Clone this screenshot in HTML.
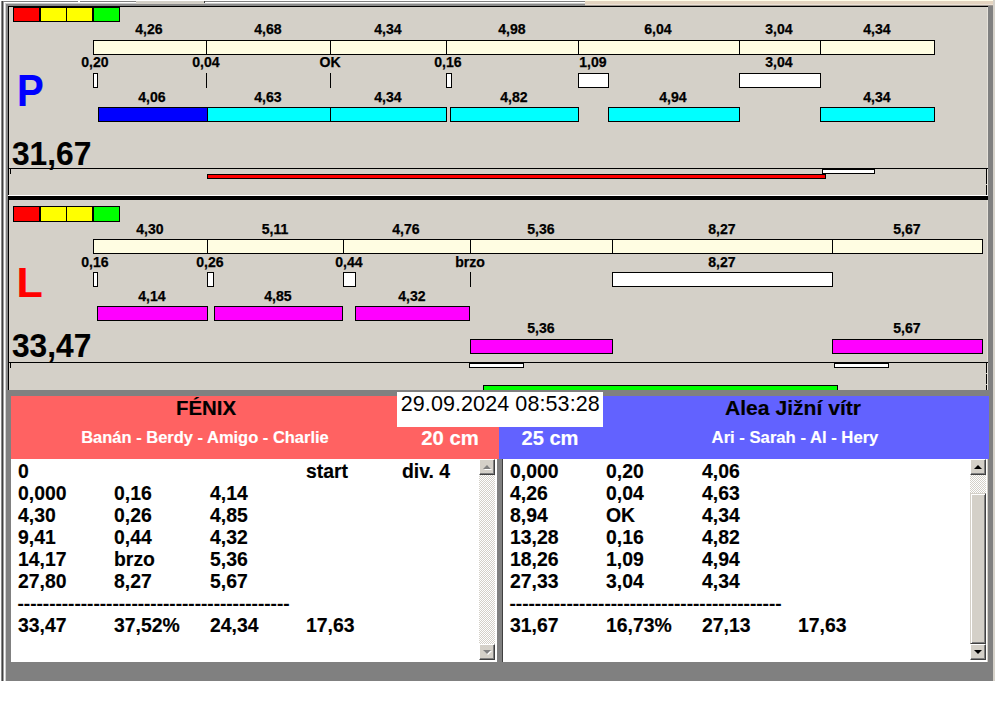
<!DOCTYPE html>
<html><head><meta charset="utf-8"><style>
html,body{margin:0;padding:0;}
body{width:995px;height:716px;position:relative;overflow:hidden;background:#fff;font-family:"Liberation Sans",sans-serif;}
.a{position:absolute;box-sizing:content-box;}
.t{position:absolute;white-space:nowrap;font-family:"Liberation Sans",sans-serif;}
.chk{background-color:#fff;background-image:linear-gradient(45deg,#d4d0c8 25%,transparent 25%,transparent 75%,#d4d0c8 75%),linear-gradient(45deg,#d4d0c8 25%,transparent 25%,transparent 75%,#d4d0c8 75%);background-size:2px 2px;background-position:0 0,1px 1px;}
.btn{width:16px;height:16px;box-sizing:border-box;background:#d4d0c8;border-top:1px solid #fff;border-left:1px solid #fff;border-right:1px solid #404040;border-bottom:1px solid #404040;box-shadow:inset -1px -1px 0 #808080;}
.thumb{box-sizing:border-box;background:#d4d0c8;border-top:1px solid #d4d0c8;border-left:1px solid #d4d0c8;border-right:1px solid #404040;border-bottom:1px solid #404040;box-shadow:inset 1px 1px 0 #fff,inset -1px -1px 0 #808080;}
svg.a{overflow:visible}
</style></head><body>
<div class="a" style="left:0px;top:0px;width:995px;height:716px;background:#ffffff;"></div>
<div class="a" style="left:1px;top:1px;width:994px;height:680px;background:#d4d0c8;"></div>
<div class="a" style="left:0px;top:0px;width:585px;height:1px;background:#ffffff;"></div>
<div class="a" style="left:585px;top:0px;width:410px;height:1px;background:#fffde8;"></div>
<div class="a" style="left:1px;top:1px;width:135px;height:1px;background:#808080;"></div>
<div class="a" style="left:1px;top:2px;width:135px;height:1px;background:#ffffff;"></div>
<div class="a" style="left:1px;top:3px;width:135px;height:1px;background:#c8c8c8;"></div>
<div class="a" style="left:204px;top:1px;width:381px;height:1px;background:#808080;"></div>
<div class="a" style="left:204px;top:2px;width:381px;height:1px;background:#ffffff;"></div>
<div class="a" style="left:204px;top:3px;width:381px;height:1px;background:#c8c8c8;"></div>
<div class="a" style="left:1px;top:4px;width:584px;height:2px;background:#8a8a8a;"></div>
<div class="a" style="left:78px;top:1px;width:2px;height:1px;background:#ffffff;"></div>
<div class="a" style="left:204px;top:1px;width:1px;height:2px;background:#404040;"></div>
<div class="a" style="left:585px;top:1px;width:410px;height:3px;background:#e4d4c0;"></div>
<div class="a" style="left:585px;top:4px;width:410px;height:1px;background:#ebe0d4;"></div>
<div class="a" style="left:585px;top:5px;width:410px;height:1px;background:#a09890;"></div>
<div class="a" style="left:1px;top:1px;width:1px;height:680px;background:#8a8a8a;"></div>
<div class="a" style="left:2px;top:1px;width:1px;height:680px;background:#404040;"></div>
<div class="a" style="left:3px;top:2px;width:1px;height:679px;background:#a0a0a0;"></div>
<div class="a" style="left:4px;top:2px;width:1px;height:679px;background:#ffffff;"></div>
<div class="a" style="left:5px;top:3px;width:1px;height:678px;background:#d0d0d0;"></div>
<div class="a" style="left:6px;top:4px;width:2px;height:677px;background:#858585;"></div>
<div class="a" style="left:988px;top:6px;width:5px;height:675px;background:#808080;"></div>
<div class="a" style="left:987px;top:7px;width:1px;height:383px;background:#e6e2da;"></div>
<div class="a" style="left:993px;top:0px;width:2px;height:681px;background:#d6d2ca;"></div>
<div class="a" style="left:8px;top:6px;width:979px;height:190px;background:#d4d0c8;"></div>
<div class="a" style="left:8px;top:6px;width:980px;height:1px;background:#000;"></div>
<div class="a" style="left:8px;top:6px;width:1px;height:189px;background:#000;"></div>
<div class="a" style="left:8px;top:195px;width:980px;height:1px;background:#fff;"></div>
<div class="a" style="left:8px;top:196px;width:980px;height:4px;background:#000;"></div>
<div class="a" style="left:8px;top:200px;width:979px;height:190px;background:#d4d0c8;"></div>
<div class="a" style="left:8px;top:200px;width:1px;height:190px;background:#000;"></div>
<div class="a" style="left:13px;top:7px;width:107px;height:15px;background:#000;"></div>
<div class="a" style="left:14px;top:8px;width:25px;height:13px;background:#ff0000;"></div>
<div class="a" style="left:41px;top:8px;width:25px;height:13px;background:#ffff00;"></div>
<div class="a" style="left:67px;top:8px;width:25px;height:13px;background:#ffff00;"></div>
<div class="a" style="left:94px;top:8px;width:25px;height:13px;background:#00ff00;"></div>
<div class="a" style="left:93px;top:40px;width:840px;height:13px;background:#fffde2;border:1px solid #000;"></div>
<div class="a" style="left:206px;top:40px;width:1px;height:15px;background:#000;"></div>
<div class="a" style="left:330px;top:40px;width:1px;height:15px;background:#000;"></div>
<div class="a" style="left:446px;top:40px;width:1px;height:15px;background:#000;"></div>
<div class="a" style="left:578px;top:40px;width:1px;height:15px;background:#000;"></div>
<div class="a" style="left:739px;top:40px;width:1px;height:15px;background:#000;"></div>
<div class="a" style="left:820px;top:40px;width:1px;height:15px;background:#000;"></div>
<div class="t" style="left:-51.00px;top:22.12px;width:400px;text-align:center;font-size:14.5px;line-height:14.5px;font-weight:bold;color:#000;transform:scaleX(0.97);transform-origin:center top;-webkit-text-stroke:0.25px #000;">4,26</div>
<div class="t" style="left:67.50px;top:22.12px;width:400px;text-align:center;font-size:14.5px;line-height:14.5px;font-weight:bold;color:#000;transform:scaleX(0.97);transform-origin:center top;-webkit-text-stroke:0.25px #000;">4,68</div>
<div class="t" style="left:187.50px;top:22.12px;width:400px;text-align:center;font-size:14.5px;line-height:14.5px;font-weight:bold;color:#000;transform:scaleX(0.97);transform-origin:center top;-webkit-text-stroke:0.25px #000;">4,34</div>
<div class="t" style="left:311.50px;top:22.12px;width:400px;text-align:center;font-size:14.5px;line-height:14.5px;font-weight:bold;color:#000;transform:scaleX(0.97);transform-origin:center top;-webkit-text-stroke:0.25px #000;">4,98</div>
<div class="t" style="left:458.00px;top:22.12px;width:400px;text-align:center;font-size:14.5px;line-height:14.5px;font-weight:bold;color:#000;transform:scaleX(0.97);transform-origin:center top;-webkit-text-stroke:0.25px #000;">6,04</div>
<div class="t" style="left:579.00px;top:22.12px;width:400px;text-align:center;font-size:14.5px;line-height:14.5px;font-weight:bold;color:#000;transform:scaleX(0.97);transform-origin:center top;-webkit-text-stroke:0.25px #000;">3,04</div>
<div class="t" style="left:676.50px;top:22.12px;width:400px;text-align:center;font-size:14.5px;line-height:14.5px;font-weight:bold;color:#000;transform:scaleX(0.97);transform-origin:center top;-webkit-text-stroke:0.25px #000;">4,34</div>
<div class="a" style="left:93px;top:73px;width:3px;height:13px;background:#fff;border:1px solid #000;"></div>
<div class="t" style="left:-105.50px;top:55.02px;width:400px;text-align:center;font-size:14.5px;line-height:14.5px;font-weight:bold;color:#000;transform:scaleX(0.97);transform-origin:center top;-webkit-text-stroke:0.25px #000;">0,20</div>
<div class="a" style="left:206px;top:73px;width:1px;height:15px;background:#000;"></div>
<div class="t" style="left:5.50px;top:55.02px;width:400px;text-align:center;font-size:14.5px;line-height:14.5px;font-weight:bold;color:#000;transform:scaleX(0.97);transform-origin:center top;-webkit-text-stroke:0.25px #000;">0,04</div>
<div class="a" style="left:330px;top:73px;width:1px;height:15px;background:#000;"></div>
<div class="t" style="left:129.50px;top:55.02px;width:400px;text-align:center;font-size:14.5px;line-height:14.5px;font-weight:bold;color:#000;transform:scaleX(0.97);transform-origin:center top;-webkit-text-stroke:0.25px #000;">OK</div>
<div class="a" style="left:446px;top:73px;width:4px;height:13px;background:#fff;border:1px solid #000;"></div>
<div class="t" style="left:248.00px;top:55.02px;width:400px;text-align:center;font-size:14.5px;line-height:14.5px;font-weight:bold;color:#000;transform:scaleX(0.97);transform-origin:center top;-webkit-text-stroke:0.25px #000;">0,16</div>
<div class="a" style="left:578px;top:73px;width:29px;height:13px;background:#fff;border:1px solid #000;"></div>
<div class="t" style="left:392.50px;top:55.02px;width:400px;text-align:center;font-size:14.5px;line-height:14.5px;font-weight:bold;color:#000;transform:scaleX(0.97);transform-origin:center top;-webkit-text-stroke:0.25px #000;">1,09</div>
<div class="a" style="left:739px;top:73px;width:80px;height:13px;background:#fff;border:1px solid #000;"></div>
<div class="t" style="left:579.00px;top:55.02px;width:400px;text-align:center;font-size:14.5px;line-height:14.5px;font-weight:bold;color:#000;transform:scaleX(0.97);transform-origin:center top;-webkit-text-stroke:0.25px #000;">3,04</div>
<div class="a" style="left:98px;top:107px;width:108px;height:13px;background:#0000ff;border:1px solid #000;"></div>
<div class="t" style="left:-48.00px;top:89.52px;width:400px;text-align:center;font-size:14.5px;line-height:14.5px;font-weight:bold;color:#000;transform:scaleX(0.97);transform-origin:center top;-webkit-text-stroke:0.25px #000;">4,06</div>
<div class="a" style="left:207px;top:107px;width:122px;height:13px;background:#00ffff;border:1px solid #000;"></div>
<div class="t" style="left:68.00px;top:89.52px;width:400px;text-align:center;font-size:14.5px;line-height:14.5px;font-weight:bold;color:#000;transform:scaleX(0.97);transform-origin:center top;-webkit-text-stroke:0.25px #000;">4,63</div>
<div class="a" style="left:330px;top:107px;width:115px;height:13px;background:#00ffff;border:1px solid #000;"></div>
<div class="t" style="left:187.50px;top:89.52px;width:400px;text-align:center;font-size:14.5px;line-height:14.5px;font-weight:bold;color:#000;transform:scaleX(0.97);transform-origin:center top;-webkit-text-stroke:0.25px #000;">4,34</div>
<div class="a" style="left:450px;top:107px;width:127px;height:13px;background:#00ffff;border:1px solid #000;"></div>
<div class="t" style="left:313.50px;top:89.52px;width:400px;text-align:center;font-size:14.5px;line-height:14.5px;font-weight:bold;color:#000;transform:scaleX(0.97);transform-origin:center top;-webkit-text-stroke:0.25px #000;">4,82</div>
<div class="a" style="left:608px;top:107px;width:130px;height:13px;background:#00ffff;border:1px solid #000;"></div>
<div class="t" style="left:473.00px;top:89.52px;width:400px;text-align:center;font-size:14.5px;line-height:14.5px;font-weight:bold;color:#000;transform:scaleX(0.97);transform-origin:center top;-webkit-text-stroke:0.25px #000;">4,94</div>
<div class="a" style="left:820px;top:107px;width:113px;height:13px;background:#00ffff;border:1px solid #000;"></div>
<div class="t" style="left:676.50px;top:89.52px;width:400px;text-align:center;font-size:14.5px;line-height:14.5px;font-weight:bold;color:#000;transform:scaleX(0.97);transform-origin:center top;-webkit-text-stroke:0.25px #000;">4,34</div>
<div class="t" style="left:17.00px;top:69.67px;font-size:43.5px;line-height:43.5px;font-weight:bold;color:#0000ff;transform:scaleX(0.92);transform-origin:left top;-webkit-text-stroke:0.15px #0000ff;">P</div>
<div class="t" style="left:11.50px;top:138.49px;font-size:32.5px;line-height:32.5px;font-weight:bold;color:#000;transform:scaleX(0.975);transform-origin:left top;-webkit-text-stroke:0.15px #000;">31,67</div>
<div class="a" style="left:8px;top:168px;width:980px;height:1px;background:#000;"></div>
<div class="a" style="left:10px;top:169px;width:1px;height:5px;background:#000;"></div>
<div class="a" style="left:822px;top:169px;width:51px;height:3px;background:#fff;border:1px solid #000;"></div>
<div class="a" style="left:207px;top:174px;width:617px;height:3px;background:#ff0000;border:1px solid #000;"></div>
<div class="a" style="left:986px;top:169px;width:1px;height:15px;background:#000;"></div>
<div class="a" style="left:986px;top:185px;width:1px;height:10px;background:#000;"></div>
<div class="a" style="left:13px;top:206px;width:107px;height:16px;background:#000;"></div>
<div class="a" style="left:14px;top:207px;width:25px;height:14px;background:#ff0000;"></div>
<div class="a" style="left:41px;top:207px;width:25px;height:14px;background:#ffff00;"></div>
<div class="a" style="left:67px;top:207px;width:25px;height:14px;background:#ffff00;"></div>
<div class="a" style="left:94px;top:207px;width:25px;height:14px;background:#00ff00;"></div>
<div class="a" style="left:93px;top:239px;width:888px;height:13px;background:#fffde2;border:1px solid #000;"></div>
<div class="a" style="left:207px;top:239px;width:1px;height:15px;background:#000;"></div>
<div class="a" style="left:343px;top:239px;width:1px;height:15px;background:#000;"></div>
<div class="a" style="left:470px;top:239px;width:1px;height:15px;background:#000;"></div>
<div class="a" style="left:612px;top:239px;width:1px;height:15px;background:#000;"></div>
<div class="a" style="left:832px;top:239px;width:1px;height:15px;background:#000;"></div>
<div class="t" style="left:-50.50px;top:221.82px;width:400px;text-align:center;font-size:14.5px;line-height:14.5px;font-weight:bold;color:#000;transform:scaleX(0.97);transform-origin:center top;-webkit-text-stroke:0.25px #000;">4,30</div>
<div class="t" style="left:74.50px;top:221.82px;width:400px;text-align:center;font-size:14.5px;line-height:14.5px;font-weight:bold;color:#000;transform:scaleX(0.97);transform-origin:center top;-webkit-text-stroke:0.25px #000;">5,11</div>
<div class="t" style="left:206.00px;top:221.82px;width:400px;text-align:center;font-size:14.5px;line-height:14.5px;font-weight:bold;color:#000;transform:scaleX(0.97);transform-origin:center top;-webkit-text-stroke:0.25px #000;">4,76</div>
<div class="t" style="left:340.50px;top:221.82px;width:400px;text-align:center;font-size:14.5px;line-height:14.5px;font-weight:bold;color:#000;transform:scaleX(0.97);transform-origin:center top;-webkit-text-stroke:0.25px #000;">5,36</div>
<div class="t" style="left:521.50px;top:221.82px;width:400px;text-align:center;font-size:14.5px;line-height:14.5px;font-weight:bold;color:#000;transform:scaleX(0.97);transform-origin:center top;-webkit-text-stroke:0.25px #000;">8,27</div>
<div class="t" style="left:706.50px;top:221.82px;width:400px;text-align:center;font-size:14.5px;line-height:14.5px;font-weight:bold;color:#000;transform:scaleX(0.97);transform-origin:center top;-webkit-text-stroke:0.25px #000;">5,67</div>
<div class="a" style="left:93px;top:272px;width:3px;height:13px;background:#fff;border:1px solid #000;"></div>
<div class="t" style="left:-105.50px;top:254.92px;width:400px;text-align:center;font-size:14.5px;line-height:14.5px;font-weight:bold;color:#000;transform:scaleX(0.97);transform-origin:center top;-webkit-text-stroke:0.25px #000;">0,16</div>
<div class="a" style="left:207px;top:272px;width:5px;height:13px;background:#fff;border:1px solid #000;"></div>
<div class="t" style="left:9.50px;top:254.92px;width:400px;text-align:center;font-size:14.5px;line-height:14.5px;font-weight:bold;color:#000;transform:scaleX(0.97);transform-origin:center top;-webkit-text-stroke:0.25px #000;">0,26</div>
<div class="a" style="left:343px;top:272px;width:11px;height:13px;background:#fff;border:1px solid #000;"></div>
<div class="t" style="left:148.50px;top:254.92px;width:400px;text-align:center;font-size:14.5px;line-height:14.5px;font-weight:bold;color:#000;transform:scaleX(0.97);transform-origin:center top;-webkit-text-stroke:0.25px #000;">0,44</div>
<div class="a" style="left:470px;top:272px;width:1px;height:15px;background:#000;"></div>
<div class="t" style="left:269.50px;top:254.92px;width:400px;text-align:center;font-size:14.5px;line-height:14.5px;font-weight:bold;color:#000;transform:scaleX(0.97);transform-origin:center top;-webkit-text-stroke:0.25px #000;">brzo</div>
<div class="a" style="left:612px;top:272px;width:219px;height:13px;background:#fff;border:1px solid #000;"></div>
<div class="t" style="left:521.50px;top:254.92px;width:400px;text-align:center;font-size:14.5px;line-height:14.5px;font-weight:bold;color:#000;transform:scaleX(0.97);transform-origin:center top;-webkit-text-stroke:0.25px #000;">8,27</div>
<div class="a" style="left:97px;top:306px;width:109px;height:13px;background:#ff00ff;border:1px solid #000;"></div>
<div class="t" style="left:-48.50px;top:289.12px;width:400px;text-align:center;font-size:14.5px;line-height:14.5px;font-weight:bold;color:#000;transform:scaleX(0.97);transform-origin:center top;-webkit-text-stroke:0.25px #000;">4,14</div>
<div class="a" style="left:214px;top:306px;width:127px;height:13px;background:#ff00ff;border:1px solid #000;"></div>
<div class="t" style="left:77.50px;top:289.12px;width:400px;text-align:center;font-size:14.5px;line-height:14.5px;font-weight:bold;color:#000;transform:scaleX(0.97);transform-origin:center top;-webkit-text-stroke:0.25px #000;">4,85</div>
<div class="a" style="left:355px;top:306px;width:113px;height:13px;background:#ff00ff;border:1px solid #000;"></div>
<div class="t" style="left:211.50px;top:289.12px;width:400px;text-align:center;font-size:14.5px;line-height:14.5px;font-weight:bold;color:#000;transform:scaleX(0.97);transform-origin:center top;-webkit-text-stroke:0.25px #000;">4,32</div>
<div class="a" style="left:470px;top:339px;width:141px;height:13px;background:#ff00ff;border:1px solid #000;"></div>
<div class="t" style="left:340.50px;top:321.02px;width:400px;text-align:center;font-size:14.5px;line-height:14.5px;font-weight:bold;color:#000;transform:scaleX(0.97);transform-origin:center top;-webkit-text-stroke:0.25px #000;">5,36</div>
<div class="a" style="left:832px;top:339px;width:149px;height:13px;background:#ff00ff;border:1px solid #000;"></div>
<div class="t" style="left:706.50px;top:321.02px;width:400px;text-align:center;font-size:14.5px;line-height:14.5px;font-weight:bold;color:#000;transform:scaleX(0.97);transform-origin:center top;-webkit-text-stroke:0.25px #000;">5,67</div>
<div class="t" style="left:16.50px;top:260.60px;font-size:43px;line-height:43px;font-weight:bold;color:#ff0000;-webkit-text-stroke:0.15px #ff0000;">L</div>
<div class="t" style="left:11.50px;top:330.49px;font-size:32.5px;line-height:32.5px;font-weight:bold;color:#000;transform:scaleX(0.975);transform-origin:left top;-webkit-text-stroke:0.15px #000;">33,47</div>
<div class="a" style="left:8px;top:362px;width:980px;height:1px;background:#000;"></div>
<div class="a" style="left:10px;top:363px;width:1px;height:5px;background:#000;"></div>
<div class="a" style="left:469px;top:363px;width:53px;height:3px;background:#fff;border:1px solid #000;"></div>
<div class="a" style="left:834px;top:363px;width:53px;height:3px;background:#fff;border:1px solid #000;"></div>
<div class="a" style="left:483px;top:385px;width:353px;height:4px;background:#00ff00;border:1px solid #000;"></div>
<div class="a" style="left:986px;top:363px;width:1px;height:10px;background:#000;"></div>
<div class="a" style="left:986px;top:374px;width:1px;height:10px;background:#000;"></div>
<div class="a" style="left:986px;top:385px;width:1px;height:5px;background:#000;"></div>
<div class="a" style="left:6px;top:390px;width:987px;height:6px;background:#808080;"></div>
<div class="a" style="left:6px;top:390px;width:5px;height:272px;background:#808080;"></div>
<div class="a" style="left:11px;top:396px;width:488px;height:63px;background:#ff6262;"></div>
<div class="a" style="left:499px;top:396px;width:490px;height:63px;background:#6262ff;"></div>
<div class="a" style="left:397px;top:392px;width:206px;height:35px;background:#ffffff;"></div>
<div class="t" style="left:400.70px;top:393.80px;font-size:21.5px;line-height:21.5px;font-weight:normal;color:#000;letter-spacing:0.1px;">29.09.2024 08:53:28</div>
<div class="t" style="left:5.70px;top:397.57px;width:400px;text-align:center;font-size:20px;line-height:20px;font-weight:bold;color:#000;transform:scaleX(1.02);transform-origin:center top;-webkit-text-stroke:0.15px #000;">FÉNIX</div>
<div class="t" style="left:5.00px;top:429.75px;width:400px;text-align:center;font-size:16px;line-height:16px;font-weight:bold;color:#fff;transform:scaleX(1.03);transform-origin:center top;-webkit-text-stroke:0.15px #fff;">Banán - Berdy - Amigo - Charlie</div>
<div class="t" style="left:250.00px;top:429.09px;width:400px;text-align:center;font-size:19.5px;line-height:19.5px;font-weight:bold;color:#fff;transform:scaleX(1.04);transform-origin:center top;-webkit-text-stroke:0.15px #fff;">20 cm</div>
<div class="t" style="left:350.00px;top:429.09px;width:400px;text-align:center;font-size:19.5px;line-height:19.5px;font-weight:bold;color:#fff;transform:scaleX(1.03);transform-origin:center top;-webkit-text-stroke:0.15px #fff;">25 cm</div>
<div class="t" style="left:592.50px;top:397.67px;width:400px;text-align:center;font-size:20px;line-height:20px;font-weight:bold;color:#000;transform:scaleX(1.055);transform-origin:center top;-webkit-text-stroke:0.15px #000;">Alea Jižní vítr</div>
<div class="t" style="left:594.50px;top:429.75px;width:400px;text-align:center;font-size:16px;line-height:16px;font-weight:bold;color:#fff;transform:scaleX(1.04);transform-origin:center top;-webkit-text-stroke:0.15px #fff;">Ari - Sarah - Al - Hery</div>
<div class="a" style="left:11px;top:459px;width:486px;height:203px;background:#ffffff;"></div>
<div class="a" style="left:497px;top:459px;width:5px;height:203px;background:#808080;"></div>
<div class="a" style="left:502px;top:459px;width:1px;height:203px;background:#404040;"></div>
<div class="a" style="left:503px;top:459px;width:484px;height:203px;background:#ffffff;"></div>
<div class="a" style="left:6px;top:662px;width:987px;height:19px;background:#808080;"></div>
<div class="t" style="left:17.50px;top:461.27px;font-size:20px;line-height:20px;font-weight:bold;color:#000;transform:scaleX(0.97);transform-origin:left top;-webkit-text-stroke:0.15px #000;">0</div>
<div class="t" style="left:305.50px;top:461.27px;font-size:20px;line-height:20px;font-weight:bold;color:#000;transform:scaleX(0.97);transform-origin:left top;-webkit-text-stroke:0.15px #000;">start</div>
<div class="t" style="left:401.50px;top:461.27px;font-size:20px;line-height:20px;font-weight:bold;color:#000;transform:scaleX(0.97);transform-origin:left top;-webkit-text-stroke:0.15px #000;">div. 4</div>
<div class="t" style="left:17.50px;top:483.17px;font-size:20px;line-height:20px;font-weight:bold;color:#000;transform:scaleX(0.97);transform-origin:left top;-webkit-text-stroke:0.15px #000;">0,000</div>
<div class="t" style="left:113.50px;top:483.17px;font-size:20px;line-height:20px;font-weight:bold;color:#000;transform:scaleX(0.97);transform-origin:left top;-webkit-text-stroke:0.15px #000;">0,16</div>
<div class="t" style="left:209.50px;top:483.17px;font-size:20px;line-height:20px;font-weight:bold;color:#000;transform:scaleX(0.97);transform-origin:left top;-webkit-text-stroke:0.15px #000;">4,14</div>
<div class="t" style="left:17.50px;top:505.07px;font-size:20px;line-height:20px;font-weight:bold;color:#000;transform:scaleX(0.97);transform-origin:left top;-webkit-text-stroke:0.15px #000;">4,30</div>
<div class="t" style="left:113.50px;top:505.07px;font-size:20px;line-height:20px;font-weight:bold;color:#000;transform:scaleX(0.97);transform-origin:left top;-webkit-text-stroke:0.15px #000;">0,26</div>
<div class="t" style="left:209.50px;top:505.07px;font-size:20px;line-height:20px;font-weight:bold;color:#000;transform:scaleX(0.97);transform-origin:left top;-webkit-text-stroke:0.15px #000;">4,85</div>
<div class="t" style="left:17.50px;top:526.97px;font-size:20px;line-height:20px;font-weight:bold;color:#000;transform:scaleX(0.97);transform-origin:left top;-webkit-text-stroke:0.15px #000;">9,41</div>
<div class="t" style="left:113.50px;top:526.97px;font-size:20px;line-height:20px;font-weight:bold;color:#000;transform:scaleX(0.97);transform-origin:left top;-webkit-text-stroke:0.15px #000;">0,44</div>
<div class="t" style="left:209.50px;top:526.97px;font-size:20px;line-height:20px;font-weight:bold;color:#000;transform:scaleX(0.97);transform-origin:left top;-webkit-text-stroke:0.15px #000;">4,32</div>
<div class="t" style="left:17.50px;top:548.87px;font-size:20px;line-height:20px;font-weight:bold;color:#000;transform:scaleX(0.97);transform-origin:left top;-webkit-text-stroke:0.15px #000;">14,17</div>
<div class="t" style="left:113.50px;top:548.87px;font-size:20px;line-height:20px;font-weight:bold;color:#000;transform:scaleX(0.97);transform-origin:left top;-webkit-text-stroke:0.15px #000;">brzo</div>
<div class="t" style="left:209.50px;top:548.87px;font-size:20px;line-height:20px;font-weight:bold;color:#000;transform:scaleX(0.97);transform-origin:left top;-webkit-text-stroke:0.15px #000;">5,36</div>
<div class="t" style="left:17.50px;top:570.77px;font-size:20px;line-height:20px;font-weight:bold;color:#000;transform:scaleX(0.97);transform-origin:left top;-webkit-text-stroke:0.15px #000;">27,80</div>
<div class="t" style="left:113.50px;top:570.77px;font-size:20px;line-height:20px;font-weight:bold;color:#000;transform:scaleX(0.97);transform-origin:left top;-webkit-text-stroke:0.15px #000;">8,27</div>
<div class="t" style="left:209.50px;top:570.77px;font-size:20px;line-height:20px;font-weight:bold;color:#000;transform:scaleX(0.97);transform-origin:left top;-webkit-text-stroke:0.15px #000;">5,67</div>
<div class="t" style="left:17.50px;top:594.41px;font-size:19px;line-height:19px;font-weight:bold;color:#000;-webkit-text-stroke:0.15px #000;">-------------------------------------------</div>
<div class="t" style="left:17.50px;top:615.07px;font-size:20px;line-height:20px;font-weight:bold;color:#000;transform:scaleX(0.97);transform-origin:left top;-webkit-text-stroke:0.15px #000;">33,47</div>
<div class="t" style="left:113.50px;top:615.07px;font-size:20px;line-height:20px;font-weight:bold;color:#000;transform:scaleX(0.97);transform-origin:left top;-webkit-text-stroke:0.15px #000;">37,52%</div>
<div class="t" style="left:209.50px;top:615.07px;font-size:20px;line-height:20px;font-weight:bold;color:#000;transform:scaleX(0.97);transform-origin:left top;-webkit-text-stroke:0.15px #000;">24,34</div>
<div class="t" style="left:305.50px;top:615.07px;font-size:20px;line-height:20px;font-weight:bold;color:#000;transform:scaleX(0.97);transform-origin:left top;-webkit-text-stroke:0.15px #000;">17,63</div>
<div class="t" style="left:509.50px;top:461.27px;font-size:20px;line-height:20px;font-weight:bold;color:#000;transform:scaleX(0.97);transform-origin:left top;-webkit-text-stroke:0.15px #000;">0,000</div>
<div class="t" style="left:605.50px;top:461.27px;font-size:20px;line-height:20px;font-weight:bold;color:#000;transform:scaleX(0.97);transform-origin:left top;-webkit-text-stroke:0.15px #000;">0,20</div>
<div class="t" style="left:701.50px;top:461.27px;font-size:20px;line-height:20px;font-weight:bold;color:#000;transform:scaleX(0.97);transform-origin:left top;-webkit-text-stroke:0.15px #000;">4,06</div>
<div class="t" style="left:509.50px;top:483.17px;font-size:20px;line-height:20px;font-weight:bold;color:#000;transform:scaleX(0.97);transform-origin:left top;-webkit-text-stroke:0.15px #000;">4,26</div>
<div class="t" style="left:605.50px;top:483.17px;font-size:20px;line-height:20px;font-weight:bold;color:#000;transform:scaleX(0.97);transform-origin:left top;-webkit-text-stroke:0.15px #000;">0,04</div>
<div class="t" style="left:701.50px;top:483.17px;font-size:20px;line-height:20px;font-weight:bold;color:#000;transform:scaleX(0.97);transform-origin:left top;-webkit-text-stroke:0.15px #000;">4,63</div>
<div class="t" style="left:509.50px;top:505.07px;font-size:20px;line-height:20px;font-weight:bold;color:#000;transform:scaleX(0.97);transform-origin:left top;-webkit-text-stroke:0.15px #000;">8,94</div>
<div class="t" style="left:605.50px;top:505.07px;font-size:20px;line-height:20px;font-weight:bold;color:#000;transform:scaleX(0.97);transform-origin:left top;-webkit-text-stroke:0.15px #000;">OK</div>
<div class="t" style="left:701.50px;top:505.07px;font-size:20px;line-height:20px;font-weight:bold;color:#000;transform:scaleX(0.97);transform-origin:left top;-webkit-text-stroke:0.15px #000;">4,34</div>
<div class="t" style="left:509.50px;top:526.97px;font-size:20px;line-height:20px;font-weight:bold;color:#000;transform:scaleX(0.97);transform-origin:left top;-webkit-text-stroke:0.15px #000;">13,28</div>
<div class="t" style="left:605.50px;top:526.97px;font-size:20px;line-height:20px;font-weight:bold;color:#000;transform:scaleX(0.97);transform-origin:left top;-webkit-text-stroke:0.15px #000;">0,16</div>
<div class="t" style="left:701.50px;top:526.97px;font-size:20px;line-height:20px;font-weight:bold;color:#000;transform:scaleX(0.97);transform-origin:left top;-webkit-text-stroke:0.15px #000;">4,82</div>
<div class="t" style="left:509.50px;top:548.87px;font-size:20px;line-height:20px;font-weight:bold;color:#000;transform:scaleX(0.97);transform-origin:left top;-webkit-text-stroke:0.15px #000;">18,26</div>
<div class="t" style="left:605.50px;top:548.87px;font-size:20px;line-height:20px;font-weight:bold;color:#000;transform:scaleX(0.97);transform-origin:left top;-webkit-text-stroke:0.15px #000;">1,09</div>
<div class="t" style="left:701.50px;top:548.87px;font-size:20px;line-height:20px;font-weight:bold;color:#000;transform:scaleX(0.97);transform-origin:left top;-webkit-text-stroke:0.15px #000;">4,94</div>
<div class="t" style="left:509.50px;top:570.77px;font-size:20px;line-height:20px;font-weight:bold;color:#000;transform:scaleX(0.97);transform-origin:left top;-webkit-text-stroke:0.15px #000;">27,33</div>
<div class="t" style="left:605.50px;top:570.77px;font-size:20px;line-height:20px;font-weight:bold;color:#000;transform:scaleX(0.97);transform-origin:left top;-webkit-text-stroke:0.15px #000;">3,04</div>
<div class="t" style="left:701.50px;top:570.77px;font-size:20px;line-height:20px;font-weight:bold;color:#000;transform:scaleX(0.97);transform-origin:left top;-webkit-text-stroke:0.15px #000;">4,34</div>
<div class="t" style="left:509.50px;top:594.41px;font-size:19px;line-height:19px;font-weight:bold;color:#000;-webkit-text-stroke:0.15px #000;">-------------------------------------------</div>
<div class="t" style="left:509.50px;top:615.07px;font-size:20px;line-height:20px;font-weight:bold;color:#000;transform:scaleX(0.97);transform-origin:left top;-webkit-text-stroke:0.15px #000;">31,67</div>
<div class="t" style="left:605.50px;top:615.07px;font-size:20px;line-height:20px;font-weight:bold;color:#000;transform:scaleX(0.97);transform-origin:left top;-webkit-text-stroke:0.15px #000;">16,73%</div>
<div class="t" style="left:701.50px;top:615.07px;font-size:20px;line-height:20px;font-weight:bold;color:#000;transform:scaleX(0.97);transform-origin:left top;-webkit-text-stroke:0.15px #000;">27,13</div>
<div class="t" style="left:797.50px;top:615.07px;font-size:20px;line-height:20px;font-weight:bold;color:#000;transform:scaleX(0.97);transform-origin:left top;-webkit-text-stroke:0.15px #000;">17,63</div>
<div class="a chk" style="left:479px;top:459px;width:16px;height:201px;"></div>
<div class="a btn" style="left:479px;top:459px;"></div>
<svg class="a" style="left:479px;top:459px" width="16" height="16"><polygon points="5,11 13,11 9,7" fill="#fff"/><polygon points="4,10 12,10 8,6" fill="#808080"/></svg>
<div class="a btn" style="left:479px;top:644px;"></div>
<svg class="a" style="left:479px;top:644px" width="16" height="16"><polygon points="5,7 13,7 9,11" fill="#fff"/><polygon points="4,6 12,6 8,10" fill="#808080"/></svg>
<div class="a chk" style="left:970px;top:459px;width:16px;height:201px;"></div>
<div class="a btn" style="left:970px;top:459px;"></div>
<svg class="a" style="left:970px;top:459px" width="16" height="16"><polygon points="4,10 12,10 8,6" fill="#000"/></svg>
<div class="a btn" style="left:970px;top:644px;"></div>
<svg class="a" style="left:970px;top:644px" width="16" height="16"><polygon points="4,6 12,6 8,10" fill="#000"/></svg>
<div class="a thumb" style="left:970px;top:493px;width:16px;height:151px;"></div>
</body></html>
